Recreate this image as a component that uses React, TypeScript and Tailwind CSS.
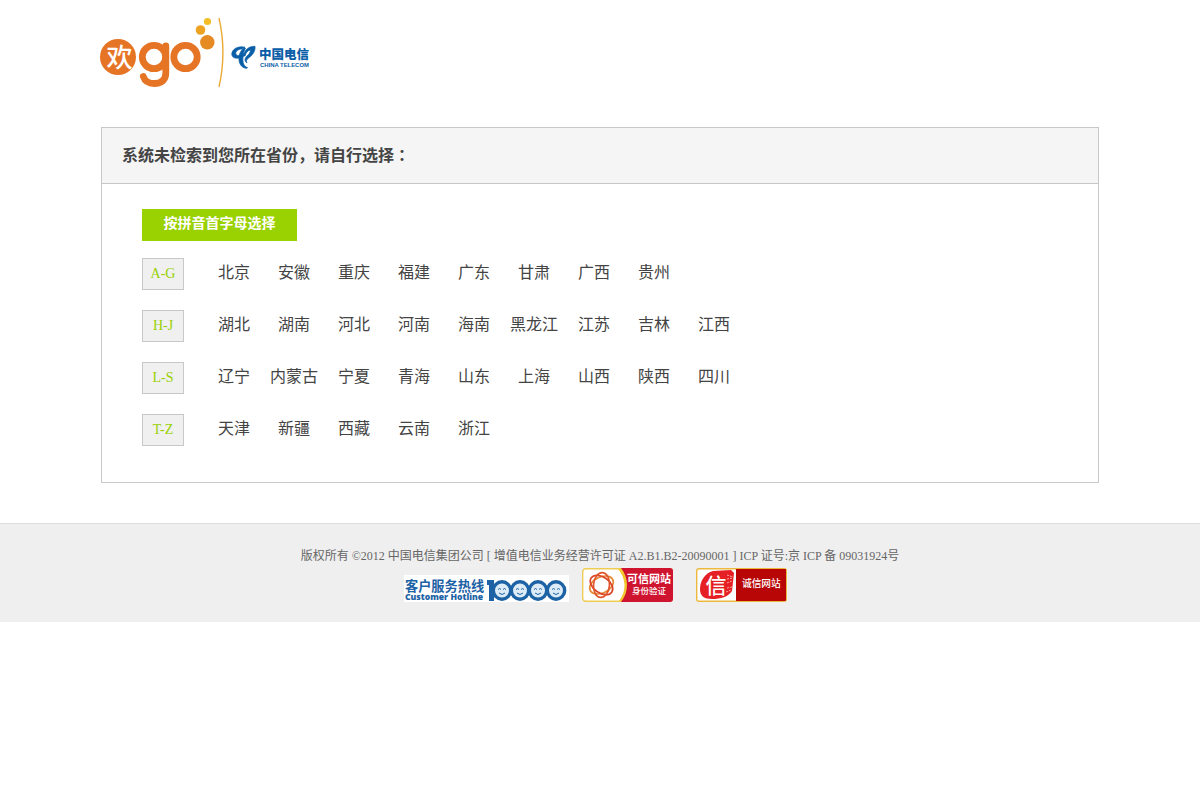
import React from 'react';

const groups = [
  { label: 'A-G', provinces: ['北京', '安徽', '重庆', '福建', '广东', '甘肃', '广西', '贵州'] },
  { label: 'H-J', provinces: ['湖北', '湖南', '河北', '河南', '海南', '黑龙江', '江苏', '吉林', '江西'] },
  { label: 'L-S', provinces: ['辽宁', '内蒙古', '宁夏', '青海', '山东', '上海', '山西', '陕西', '四川'] },
  { label: 'T-Z', provinces: ['天津', '新疆', '西藏', '云南', '浙江'] },
];

function HuangoLogo() {
  return (
    <svg width="124" height="72" viewBox="0 0 124 72" className="font-['Noto_Sans_CJK_SC',sans-serif]">
      <circle cx="18" cy="41" r="18" fill="#e67425" />
      <text x="19.500" y="50.500" fontSize="26" fontWeight="500" fill="#fff" textAnchor="middle">欢</text>
      <g fill="none" stroke="#e67425" strokeWidth="6.8">
        <circle cx="54" cy="41" r="11.7" />
        <path d="M65.8 30v27c0 7-4.500 10.500-11.500 10.500-5.500 0-9.500-2.500-11-7" strokeLinecap="round" />
        <circle cx="85.500" cy="41" r="11.7" />
      </g>
      <circle cx="107.3" cy="26.3" r="7.2" fill="#e68a24" />
      <circle cx="100.5" cy="14" r="4.8" fill="#eda222" />
      <circle cx="107.5" cy="5.5" r="3.6" fill="#f3bd26" />
      <path d="M119 2c5 22 5 47 0 69" fill="none" stroke="#e9ab35" strokeWidth="1.4" />
    </svg>
  );
}

function TelecomLogo() {
  return (
    <svg width="82" height="28" viewBox="0 0 82 28">
      <g fill="#0a5ea8" stroke="#0a5ea8" strokeWidth=".7" strokeLinejoin="round">
        <path d="M16.500 3.200C9 1.500 3.500 6 3.800 10.500c.5 4 6 5.200 12.200 1.500l-.5-1.500c-4 1.800-7.500 1.500-7.700-1C7.500 7.200 10.500 5 14 5z" />
        <path d="M16.500 3.200C12 7 10.500 11.500 11 16c.5 5.500 4 8.300 8 8.300l.5-.8C15.500 22.500 14.500 18 15 13c.3-3.500 1-6.500 2.500-8.500z" />
        <path d="M15.500 12C16.500 5.500 21 2.300 27 2.300c.5 4.700-2 8.700-7 12.200-1.500 1-2 2.500-1 4.500-2.500-1.500-2.500-4.500-.5-6.500 3-2.500 4-4.500 4-6.500-3 .5-4.500 2.500-5.500 6z" />
      </g>
      <text x="31" y="15" fontSize="12.500" fontWeight="900" fill="#0a5ea8" className="font-['Noto_Sans_CJK_SC',sans-serif]">中国电信</text>
      <text x="32" y="23" fontSize="5.900" fontWeight="700" fill="#0a5ea8" className="font-['Liberation_Sans',sans-serif]">CHINA TELECOM</text>
    </svg>
  );
}

function HotlineBanner() {
  return (
    <svg width="165" height="27" viewBox="0 0 165 27">
      <rect width="165" height="27" fill="#fff" />
      <text x="1" y="16" fontSize="13.200" fontWeight="700" fill="#1c62a5" className="font-['Noto_Sans_CJK_SC',sans-serif]">客户服务热线</text>
      <text x="1" y="25" fontSize="8.600" fontWeight="800" fill="#1c62a5" className="font-['Open_Sans',sans-serif]">Customer Hotline</text>
      <path d="M83 5h7v21h-5V10h-2z" fill="#1c62a5" />
      {[98, 116, 134, 152].map(x => (
        <g key={x} fill="none" stroke="#1c62a5">
          <circle cx={x} cy="15.500" r="8.7" fill="#dcebf6" strokeWidth="3.400" />
          <path d={`M${x - 4} 14.500q1.500-2 3 0M${x + 1} 14.500q1.500-2 3 0M${x - 3} 18q3 3 6 0`} strokeWidth="1" />
        </g>
      ))}
    </svg>
  );
}

function TrustedSite() {
  return (
    <svg width="91" height="34" viewBox="0 0 91 34" className="font-['Noto_Sans_CJK_SC',sans-serif]">
      <rect x=".7" y=".7" width="89.6" height="32.6" rx="3" fill="#fff" stroke="#efcd55" strokeWidth="1.4" />
      <path d="M36 1c8 9 9 22 1 32h7c7-10 6-23-1-32z" fill="#f3c72e" />
      <path d="M39 0h49q3 0 3 3v28q0 3-3 3H39c8-10 8-24 0-34z" fill="#cf1430" />
      <g fill="none" strokeWidth="1.7">
        <ellipse cx="19.500" cy="17" rx="12.5" ry="8" stroke="#e98a35" transform="rotate(-25 19.500 17)" />
        <ellipse cx="19.500" cy="17" rx="12.5" ry="8" stroke="#dc4528" transform="rotate(35 19.500 17)" />
        <ellipse cx="19.500" cy="17" rx="12.5" ry="8" stroke="#e0552c" transform="rotate(95 19.500 17)" />
      </g>
      <text x="45" y="15" fontSize="11" fontWeight="700" fill="#fff">可信网站</text>
      <text x="50" y="26" fontSize="8.500" fontWeight="500" fill="#fff">身份验证</text>
    </svg>
  );
}

function HonestSite() {
  return (
    <svg width="91" height="34" viewBox="0 0 91 34" className="font-['Noto_Sans_CJK_SC',sans-serif]">
      <rect x=".7" y=".7" width="89.6" height="32.6" rx="2" fill="#fff" stroke="#edb83e" strokeWidth="1.4" />
      <path d="M40 1h50v31q0 1-1 1H40z" fill="#b80505" />
      <path d="M17 3l18-1 3 3-2 18c-4 6-11 8-20 8-8 0-12-3-12-10C4 13 9 5 17 3z" fill="#e51f23" />
      <path d="M31 7l6 2M31 11l6-1M31 15l5-2M31 20l5-1M30 24l5-2" stroke="#f8aaa8" strokeDasharray="2 1" />
      <text x="20" y="25" fontSize="21" fontWeight="500" fill="#fff" textAnchor="middle">信</text>
      <text x="46" y="19" fontSize="9.700" fontWeight="500" fill="#fff">诚信网站</text>
    </svg>
  );
}

export default function App() {
  return (
    <div className="min-h-screen bg-white font-['Liberation_Serif','Noto_Sans_CJK_SC',serif] text-[#444]">
      <div className="mx-auto max-w-[1000px]">
        <header className="flex items-start pt-4">
          <a href="#" aria-label="欢go"><HuangoLogo /></a>
          <a href="#" aria-label="中国电信" className="mt-7 ml-1"><TelecomLogo /></a>
        </header>

        <main className="mx-px mt-[39px] border border-[#c8c8c8]">
          <h1 className="border-b border-[#c8c8c8] bg-[#f5f5f5] px-5 pt-4 pb-[15px] text-base font-bold">
            系统未检索到您所在省份，请自行选择<span className="font-['Noto_Sans_CJK_TC',sans-serif] leading-none">：</span>
          </h1>
          <div className="px-10 pt-[25px] pb-9">
            <h2 className="mb-[17px] h-8 w-[155px] bg-[#99d101] text-center text-sm leading-[30px] font-bold text-white">
              按拼音首字母选择
            </h2>
            <div className="space-y-5">
              {groups.map(group => (
                <div key={group.label} className="flex items-start">
                  <div className="mr-5 h-8 w-[42px] border border-[#c8c8c8] bg-[#f0f0f0] text-center text-sm leading-[30px] text-[#99d101]">
                    {group.label}
                  </div>
                  <ul className="flex flex-wrap">
                    {group.provinces.map(name => (
                      <li key={name} className="w-15 text-center text-base leading-[30px]">
                        <a href="#" className="whitespace-nowrap">{name}</a>
                      </li>
                    ))}
                  </ul>
                </div>
              ))}
            </div>
          </div>
        </main>
      </div>

      <footer className="mt-10 border-t border-[#ddd] bg-[#efefef] pt-6 pb-5 text-center text-xs text-[#666]">
        <p className="leading-4">
          版权所有 ©2012 中国电信集团公司 [ 增值电信业务经营许可证 A2.B1.B2-20090001 ] ICP 证号:京 ICP 备 09031924号
        </p>
        <div className="mt-1 mr-[9px] flex items-end justify-center">
          <a href="#" aria-label="客户服务热线 10000" className="mr-[13px]"><HotlineBanner /></a>
          <a href="#" aria-label="可信网站 身份验证" className="mr-[23px]"><TrustedSite /></a>
          <a href="#" aria-label="诚信网站"><HonestSite /></a>
        </div>
      </footer>
    </div>
  );
}
